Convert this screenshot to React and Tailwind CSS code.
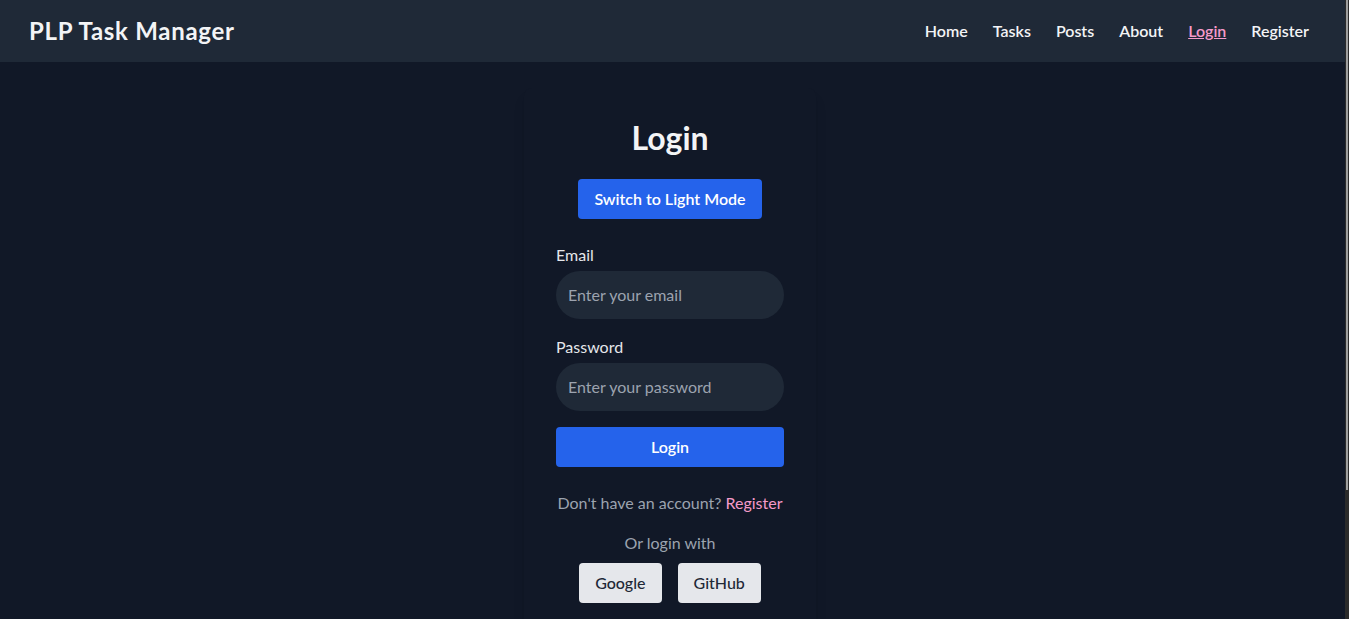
import React, { useState } from "react";

const navLinks = ["Home", "Tasks", "Posts", "About", "Login", "Register"];

const Navbar = () => {
  return (
    <nav className="flex items-center justify-between h-[62px] pl-[29px] pr-9 bg-[#1f2937] text-[#f3f4f6]">
      <h1 className="text-2xl font-bold tracking-[0.03em]">PLP Task Manager</h1>
      <ul className="flex items-center gap-[25px]">
        {navLinks.map((link) => (
          <li key={link}>
            <a
              href="#"
              className={
                link === "Login"
                  ? "font-semibold text-[#f59ac9] underline"
                  : "font-semibold text-[#f3f4f6]"
              }
            >
              {link}
            </a>
          </li>
        ))}
      </ul>
    </nav>
  );
};

const Login = () => {
  const [input, setInput] = useState({ email: "", password: "" });

  return (
    <div className="w-[292px] mx-auto mt-[26px] mb-[147px] p-8 bg-[#111827] shadow-lg rounded-lg">
      <h2 className="text-[32px] leading-9 font-bold text-center text-[#f3f4f6] mb-[23px]">Login</h2>
      <div className="flex justify-center mb-6">
        <button className="px-4 py-2 bg-[#2563eb] text-white font-semibold rounded">
          Switch to Light Mode
        </button>
      </div>
      <form className="flex flex-col gap-4" onSubmit={(e) => e.preventDefault()}>
        <div>
          <label className="block mb-1 text-[#e5e7eb]">Email</label>
          <input
            type="email"
            value={input.email}
            onChange={(e) => setInput({ ...input, email: e.target.value })}
            placeholder="Enter your email"
            className="w-full px-3 py-3 rounded-full bg-[#1f2937] text-[#f3f4f6] placeholder-[#9ca3af] outline-none"
          />
        </div>
        <div>
          <label className="block mb-1 text-[#e5e7eb]">Password</label>
          <input
            type="password"
            value={input.password}
            onChange={(e) => setInput({ ...input, password: e.target.value })}
            placeholder="Enter your password"
            className="w-full px-3 py-3 rounded-full bg-[#1f2937] text-[#f3f4f6] placeholder-[#9ca3af] outline-none"
          />
        </div>
        <button type="submit" className="w-full py-2 bg-[#2563eb] text-white font-semibold rounded">
          Login
        </button>
      </form>
      <p className="mt-6 text-center text-[#9ca3af]">
        Don't have an account? <a href="#" className="text-[#f59ac9]">Register</a>
      </p>
      <p className="mt-4 text-center text-[#9ca3af]">Or login with</p>
      <div className="flex justify-center gap-4 mt-2">
        <button className="px-4 py-2 bg-[#e5e7eb] text-[#1f2937] font-medium rounded">Google</button>
        <button className="px-4 py-2 bg-[#e5e7eb] text-[#1f2937] font-medium rounded">GitHub</button>
      </div>
    </div>
  );
};

export default function App() {
  return (
    <div className="flex h-screen overflow-hidden bg-[#111827] font-['Lato',sans-serif]">
      <div className="flex-1 min-w-0">
        <Navbar />
        <main className="pr-[5px]">
          <Login />
        </main>
      </div>
      {/* scrollbar strip */}
      <div className="w-1 h-full px-[1px] bg-[#2b2b2b]">
        <div className="h-[490px] bg-[#9f9f9f]" />
      </div>
    </div>
  );
}
